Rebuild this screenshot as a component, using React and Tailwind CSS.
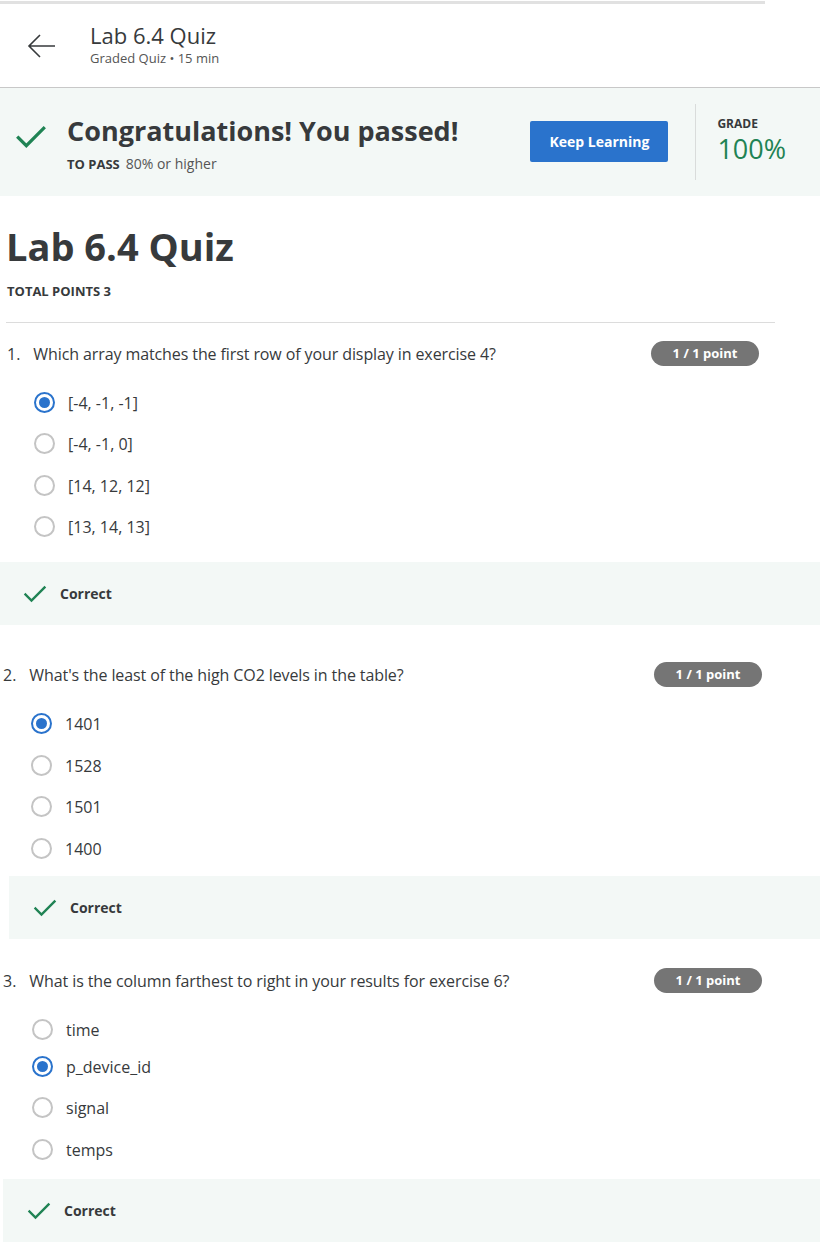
const font = { fontFamily: '"Open Sans", "Noto Sans", sans-serif' };

const Check = ({ className }) => (
  <svg viewBox="0 0 24 24" className={className} fill="none" stroke="currentColor" strokeWidth="2.4" strokeLinecap="square">
    <path d="M2.5 12.5 L8.5 18.5 L21.5 5.5" />
  </svg>
);

const Radio = ({ checked }) =>
  checked ? (
    <span className="w-[21px] h-[21px] rounded-full border-[2px] border-[#2a73cc] flex items-center justify-center shrink-0">
      <span className="w-[11px] h-[11px] rounded-full bg-[#2a73cc]" />
    </span>
  ) : (
    <span className="w-[21px] h-[21px] rounded-full border-[2px] border-[#c4c4c4] shrink-0" />
  );

const Badge = () => (
  <span className="w-[108px] h-[25px] rounded-full bg-[#757575] text-white text-[13px] font-bold flex items-center justify-center">
    1 / 1 point
  </span>
);

const Feedback = ({ className, iconPad }) => (
  <div className={`h-[63px] bg-[#f3f8f6] flex items-center ${className}`}>
    <Check className={`w-[24px] h-[24px] text-[#1f8354] ${iconPad}`} />
    <span className="ml-[13px] text-[14px] font-bold text-[#373a3c]">Correct</span>
  </div>
);

const Question = ({ num, text, options, selected, numX, textX, badgeX, radioX, optionGap, feedback }) => (
  <section>
    <div className="flex items-center">
      <span className="text-[16px] text-[#373a3c]" style={{ marginLeft: numX }}>{num}.</span>
      <span className="text-[16px] text-[#373a3c] tracking-[-0.1px]" style={{ marginLeft: textX }}>{text}</span>
      <span className="ml-auto" style={{ marginRight: badgeX }}><Badge /></span>
    </div>
    <div className="flex flex-col mt-[26px]" style={{ paddingLeft: radioX }}>
      {options.map((o, i) => (
        <div key={o} className="flex items-center h-[21px]" style={{ marginTop: i === 0 ? 0 : optionGap[i - 1] }}>
          <Radio checked={i === selected} />
          <span className="ml-[13px] text-[16px] text-[#373a3c]">{o}</span>
        </div>
      ))}
    </div>
    {feedback}
  </section>
);

export default function App() {
  return (
    <div className="w-[820px] bg-white text-[#373a3c]" style={font}>
      <div className="h-[3px] w-[765px] bg-[#e1e1e1] mt-[1px]" />
      <header className="h-[84px] flex items-center border-b border-[#c8c8c8]">
        <svg viewBox="0 0 30 30" className="w-[30px] h-[30px] ml-[27px] text-[#373a3c]" fill="none" stroke="currentColor" strokeWidth="1.6">
          <path d="M28 15 H2 M13 4 L2 15 L13 26" />
        </svg>
        <div className="ml-[33px] flex flex-col -mt-[3px]">
          <span className="text-[22px] leading-[28px] text-[#373a3c]">Lab 6.4 Quiz</span>
          <span className="text-[13px] leading-[18px] text-[#555]">Graded Quiz • 15 min</span>
        </div>
      </header>

      <div className="h-[108px] bg-[#f3f8f6] flex items-center">
        <Check className="w-[32px] h-[32px] ml-[15px] -mt-[10px] text-[#1f8354]" />
        <div className="ml-[20px] flex flex-col mt-[2px]">
          <span className="text-[27px] leading-[34px] font-bold text-[#373a3c]">Congratulations! You passed!</span>
          <span className="mt-[7px] text-[14px] leading-[18px]">
            <span className="font-bold text-[13px]">TO PASS</span>
            <span className="ml-[6px] text-[#555]">80% or higher</span>
          </span>
        </div>
        <button className="ml-[72px] w-[138px] h-[41px] -mt-[1px] bg-[#2a73cc] rounded-[2px] text-white text-[14px] font-bold">
          Keep Learning
        </button>
        <div className="ml-[27px] w-px h-[76px] bg-[#d9dcdb]" />
        <div className="ml-[21px] flex flex-col -mt-[3px]">
          <span className="text-[12px] font-bold leading-[16px] text-[#373a3c]">GRADE</span>
          <span className="text-[27px] leading-[34px] text-[#1f8354]">100%</span>
        </div>
      </div>

      <h1 className="ml-[6px] mt-[25px] text-[38px] leading-[50px] font-bold text-[#373a3c]">Lab 6.4 Quiz</h1>
      <div className="ml-[7px] mt-[12px] text-[13px] font-bold leading-[16px]">TOTAL POINTS 3</div>
      <div className="ml-[6px] w-[769px] h-px bg-[#dcdcdc] mt-[23px]" />

      <div className="pt-[18px]">
        <Question
          num={1}
          text="Which array matches the first row of your display in exercise 4?"
          options={["[-4, -1, -1]", "[-4, -1, 0]", "[14, 12, 12]", "[13, 14, 13]"]}
          selected={0}
          numX={7}
          textX={13}
          badgeX={61}
          radioX={34}
          optionGap={[20, 21, 20]}
          feedback={<div className="mt-[25px]"><Feedback className="ml-0" iconPad="ml-[23px]" /></div>}
        />
      </div>

      <div className="pt-[37px]">
        <Question
          num={2}
          text="What's the least of the high CO2 levels in the table?"
          options={["1401", "1528", "1501", "1400"]}
          selected={0}
          numX={3}
          textX={13}
          badgeX={58}
          radioX={31}
          optionGap={[21, 20, 21]}
          feedback={<div className="mt-[17px]"><Feedback className="ml-[9px]" iconPad="ml-[24px]" /></div>}
        />
      </div>

      <div className="pt-[29px]">
        <Question
          num={3}
          text="What is the column farthest to right in your results for exercise 6?"
          options={["time", "p_device_id", "signal", "temps"]}
          selected={1}
          numX={3}
          textX={13}
          badgeX={58}
          radioX={32}
          optionGap={[16, 20, 21]}
          feedback={<div className="mt-[19px]"><Feedback className="ml-[3px]" iconPad="ml-[24px]" /></div>}
        />
      </div>
      <div className="h-[11px]" />
    </div>
  );
}
